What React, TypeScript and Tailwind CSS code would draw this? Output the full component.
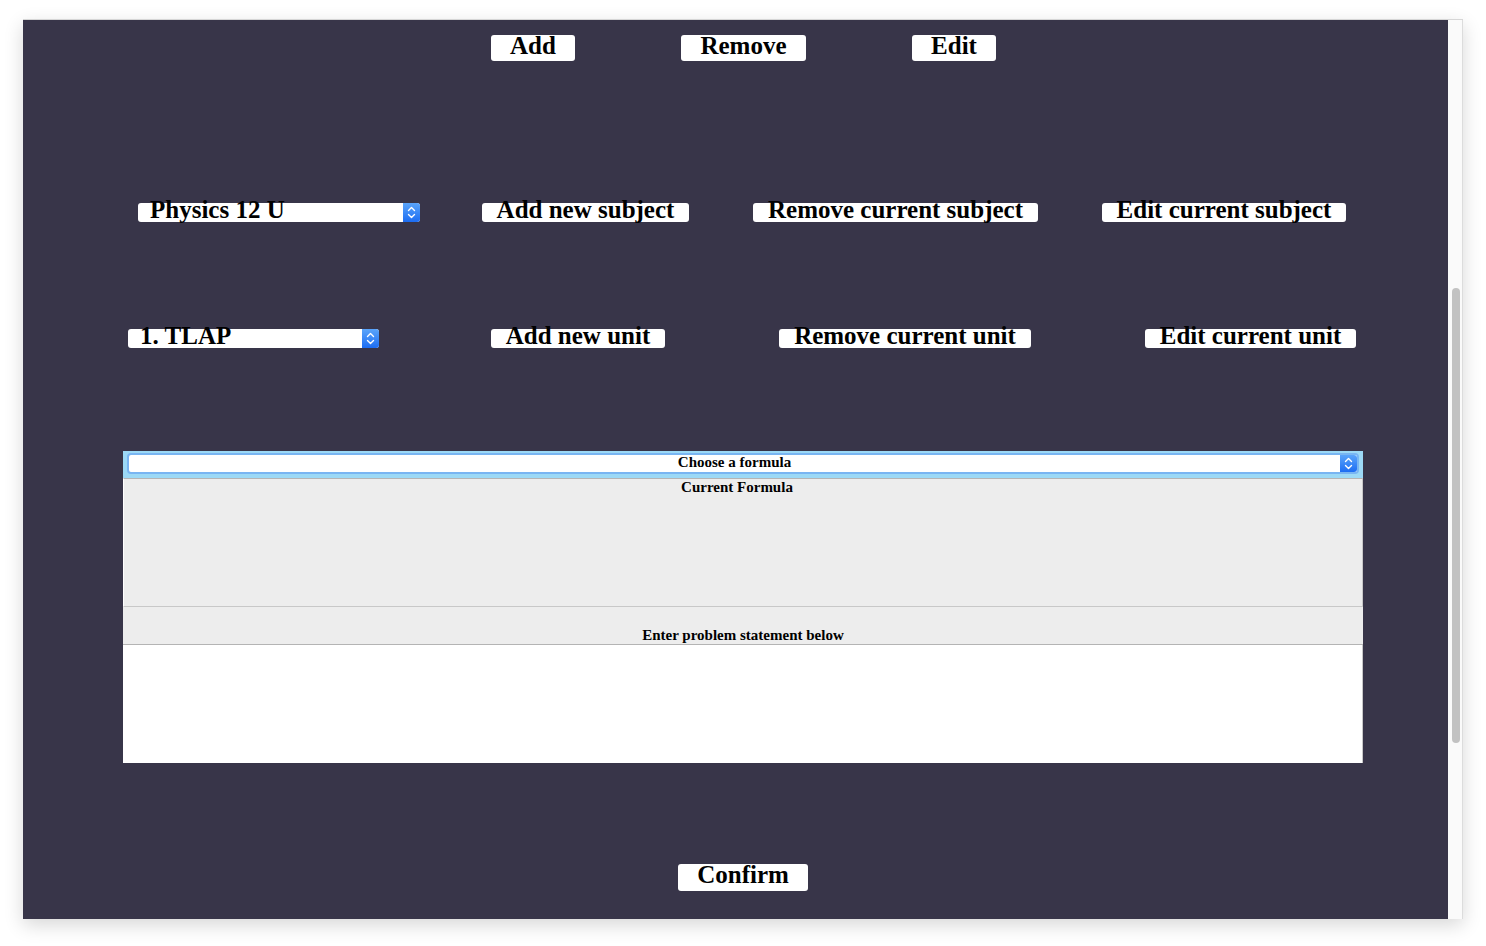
import React from "react";

const Arrows = () => (
  <svg width="17" height="19" viewBox="0 0 17 19" fill="none">
    <path d="M5.5 7.5 L8.5 4.5 L11.5 7.5" stroke="white" strokeWidth="1.4" strokeLinecap="round" strokeLinejoin="round" />
    <path d="M5.5 11.5 L8.5 14.5 L11.5 11.5" stroke="white" strokeWidth="1.4" strokeLinecap="round" strokeLinejoin="round" />
  </svg>
);

function Btn({ className, children }: { className: string; children: React.ReactNode }) {
  return (
    <button
      className={`flex shrink-0 justify-center items-start whitespace-nowrap rounded-[3px] bg-white text-[25px] font-bold text-black font-['Liberation_Serif','Times_New_Roman',serif] ${className}`}
    >
      {children}
    </button>
  );
}

function SelectBox({ className, label }: { className: string; label: string }) {
  return (
    <div className={`flex shrink-0 h-[19px] rounded-[3px] bg-white ${className}`}>
      <div className="flex-1 pl-[12px] whitespace-nowrap text-[25px] leading-[13px] font-bold text-black font-['Liberation_Serif','Times_New_Roman',serif]">
        {label}
      </div>
      <div className="flex w-[17px] items-center justify-center rounded-r-[3px] bg-gradient-to-b from-[#5aa4fa] to-[#1c6cf2]">
        <Arrows />
      </div>
    </div>
  );
}

export default function App() {
  return (
    <div className="min-h-screen bg-white pl-[23px] pt-[19px]">
      <div className="flex h-[900px] w-[1440px] border-t border-[#d6d6d6] shadow-[0_6px_18px_rgba(0,0,0,0.16)]">
        {/* Main content */}
        <div className="w-[1425px] bg-[#383549] pt-[15px]">
          {/* Top actions */}
          <div className="ml-[468px] flex">
            <Btn className="h-[26px] w-[84px] leading-[21px]">Add</Btn>
            <Btn className="ml-[106px] h-[26px] w-[125px] leading-[21px]">Remove</Btn>
            <Btn className="ml-[106px] h-[26px] w-[84px] leading-[21px]">Edit</Btn>
          </div>

          {/* Subject row */}
          <div className="ml-[115px] mt-[142px] flex">
            <SelectBox className="w-[282px]" label="Physics 12 U" />
            <Btn className="ml-[62px] h-[19px] w-[207px] leading-[13px]">Add new subject</Btn>
            <Btn className="ml-[64px] h-[19px] w-[285px] leading-[13px]">Remove current subject</Btn>
            <Btn className="ml-[64px] h-[19px] w-[244px] leading-[13px]">Edit current subject</Btn>
          </div>

          {/* Unit row */}
          <div className="ml-[105px] mt-[107px] flex">
            <SelectBox className="w-[251px]" label="1. TLAP" />
            <Btn className="ml-[112px] h-[19px] w-[174px] leading-[13px]">Add new unit</Btn>
            <Btn className="ml-[114px] h-[19px] w-[252px] leading-[13px]">Remove current unit</Btn>
            <Btn className="ml-[114px] h-[19px] w-[211px] leading-[13px]">Edit current unit</Btn>
          </div>

          {/* Formula panel */}
          <div className="ml-[100px] mt-[103px] w-[1240px] text-[15px] font-bold text-black font-['Liberation_Serif','Times_New_Roman',serif]">
            <div className="h-[27px] bg-[#9cd9f6] px-[4px] pt-[2px]">
              <div className="flex h-[21px] rounded-[4px] border-2 border-[#79b5f2] bg-white">
                <div className="flex-1 text-center leading-[14px]">Choose a formula</div>
                <div className="flex w-[17px] items-center justify-center rounded-r-[3px] bg-gradient-to-b from-[#5aa4fa] to-[#1c6cf2]">
                  <Arrows />
                </div>
              </div>
            </div>
            <div className="h-[129px] border border-[#c8c8c8] border-t-[#b5b5b5] border-l-white bg-[#ededed] pr-[12px] text-center leading-[16px]">
              Current Formula
            </div>
            <div className="flex h-[38px] items-end justify-center border-b border-[#b4b4b4] bg-[#ededed] leading-[18px]">
              Enter problem statement below
            </div>
            <textarea className="block h-[118px] w-full resize-none border-r border-[#c8c8c8] bg-white outline-none" />
          </div>

          {/* Confirm */}
          <div className="ml-[655px] mt-[101px] flex">
            <Btn className="h-[27px] w-[130px] leading-[22px]">Confirm</Btn>
          </div>
        </div>

        {/* Scrollbar */}
        <div className="w-[15px] border-r border-[#dcdcdc] bg-[#fafafa] pl-[4px] pt-[268px]">
          <div className="h-[455px] w-[8px] rounded-full bg-[#c2c2c2]" />
        </div>
      </div>
    </div>
  );
}
